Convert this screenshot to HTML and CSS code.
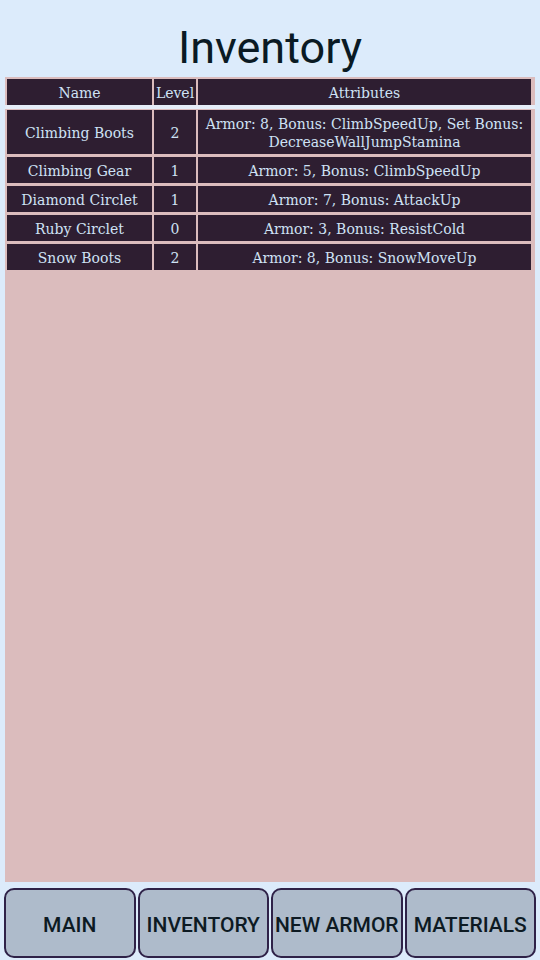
FILE: index.html
```html
<!DOCTYPE html>
<html>
<head>
<meta charset="utf-8">
<link rel="stylesheet" href="styles.css">
</head>
<body>
<div class="screen">
  <h1 class="title">Inventory</h1>
  <div class="panel">
    <div class="grid head">
      <div class="cell">Name</div>
      <div class="cell">Level</div>
      <div class="cell">Attributes</div>
    </div>
    <div class="stripe"></div>
    <div class="grid body">
      <div class="cell tall">Climbing Boots</div>
      <div class="cell tall">2</div>
      <div class="cell tall">Armor: 8, Bonus: ClimbSpeedUp, Set Bonus: DecreaseWallJumpStamina</div>
      <div class="cell">Climbing Gear</div>
      <div class="cell">1</div>
      <div class="cell">Armor: 5, Bonus: ClimbSpeedUp</div>
      <div class="cell">Diamond Circlet</div>
      <div class="cell">1</div>
      <div class="cell">Armor: 7, Bonus: AttackUp</div>
      <div class="cell">Ruby Circlet</div>
      <div class="cell">0</div>
      <div class="cell">Armor: 3, Bonus: ResistCold</div>
      <div class="cell">Snow Boots</div>
      <div class="cell">2</div>
      <div class="cell">Armor: 8, Bonus: SnowMoveUp</div>
    </div>
  </div>
  <nav class="tabs">
    <button class="tab">MAIN</button>
    <button class="tab">INVENTORY</button>
    <button class="tab">NEW ARMOR</button>
    <button class="tab">MATERIALS</button>
  </nav>
</div>
</body>
</html>
```
FILE: styles.css
```css
html, body {
  margin: 0;
  padding: 0;
}
body {
  background: #dcebfb;
  width: 540px;
  height: 960px;
  overflow: hidden;
}
.screen {
  display: flex;
  flex-direction: column;
  height: 960px;
}
.title {
  margin: 0;
  height: 77px;
  box-sizing: border-box;
  padding-top: 22px;
  text-align: center;
  font-family: Roboto, sans-serif;
  font-weight: 400;
  font-size: 45px;
  line-height: 52px;
  color: #0a1a24;
}
.panel {
  margin: 0 5px;
  height: 805px;
  background: #dbbcbd;
  padding: 2px 4px 0 2px;
  box-sizing: border-box;
}
.grid {
  display: grid;
  grid-template-columns: 145px 42px 1fr;
  column-gap: 2px;
  row-gap: 3px;
}
.stripe {
  height: 4px;
  background: #e6edf8;
  margin: 0 -4px 1px -2px;
}
.body {
  padding-bottom: 1px;
}
.cell {
  background: #2e1e31;
  color: #cfe2f5;
  font-family: "DejaVu Serif", serif;
  font-size: 14px;
  line-height: 18px;
  height: 26px;
  display: flex;
  align-items: center;
  justify-content: center;
  text-align: center;
  padding: 2px 2px 0 2px;
  box-sizing: border-box;
}
.cell.tall {
  height: 44px;
}
.tabs {
  display: flex;
  gap: 2px;
  padding: 6px 4px 2px 4px;
}
.tab {
  flex: 1;
  height: 70px;
  background: #aebbcb;
  border: 2px solid #2f2248;
  border-radius: 10px;
  font-family: Roboto, sans-serif;
  font-weight: 500;
  font-size: 21px;
  color: #0d1a23;
  padding: 4px 0 0 0;
}
```
